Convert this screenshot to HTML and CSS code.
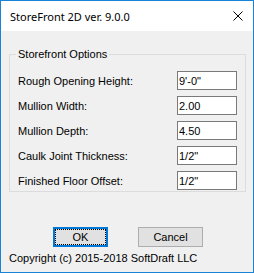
FILE: index.html
```html
<!DOCTYPE html>
<html lang="en">
<head>
    <meta charset="UTF-8">
    <meta name="viewport" content="width=device-width, initial-scale=1.0">
    <title>StoreFront 2D</title>
    <link rel="stylesheet" href="styles.css">
</head>
<body>
    <div class="window">
        <div class="titlebar">
            <span class="title">StoreFront 2D ver. 9.0.0</span>
            <svg class="close" width="10" height="10" viewBox="0 0 10 10">
                <path d="M0.5 0.5 L9.5 9.5 M9.5 0.5 L0.5 9.5" stroke="#000" stroke-width="1" fill="none"/>
            </svg>
        </div>
        <div class="client">
            <fieldset class="group">
                <legend>Storefront Options</legend>
                <div class="row">
                    <label>Rough Opening Height:</label>
                    <input type="text" value="9'-0&quot;">
                </div>
                <div class="row">
                    <label>Mullion Width:</label>
                    <input type="text" value="2.00">
                </div>
                <div class="row">
                    <label>Mullion Depth:</label>
                    <input type="text" value="4.50">
                </div>
                <div class="row">
                    <label>Caulk Joint Thickness:</label>
                    <input type="text" value="1/2&quot;">
                </div>
                <div class="row">
                    <label>Finished Floor Offset:</label>
                    <input type="text" value="1/2&quot;">
                </div>
            </fieldset>
            <div class="buttons">
                <button class="btn btn-ok">OK</button>
                <button class="btn btn-cancel">Cancel</button>
            </div>
            <div class="copyright">Copyright (c) 2015-2018 SoftDraft LLC</div>
        </div>
    </div>
</body>
</html>
```

FILE: styles.css
```css
body {
    margin: 0;
    font-family: "Liberation Sans", Arial, sans-serif;
    font-size: 11px;
    color: #000;
}

.window {
    width: 254px;
    height: 273px;
    box-sizing: border-box;
    border: 1px solid #1883d7;
    background-color: #f0f0f0;
    display: flex;
    flex-direction: column;
}

.titlebar {
    height: 30px;
    background-color: #fff;
    display: flex;
    align-items: center;
    justify-content: space-between;
    padding: 0 10px 0 9px;
}

.title {
    font-family: "Noto Sans", sans-serif;
    font-size: 11px;
}

.client {
    flex: 1;
    display: flex;
    flex-direction: column;
}

.group {
    margin: 16px 7px 0 8px;
    padding: 0 8px 1px 8px;
    border: 1px solid #dcdcdc;
    display: flex;
    flex-direction: column;
    gap: 6px;
}

.group legend {
    padding: 0 2px;
    margin-left: -2px;
    line-height: 14px;
    margin-bottom: 10px;
}

.row {
    display: flex;
    justify-content: space-between;
    align-items: center;
    height: 19px;
}

.row input {
    width: 60px;
    height: 19px;
    box-sizing: border-box;
    border: 1px solid #7a7a7a;
    background: #fff;
    padding: 0 1px;
    margin: 0;
    font-family: inherit;
    font-size: 11px;
    color: #000;
    outline: none;
}

.buttons {
    display: flex;
    gap: 30px;
    margin: 35px 0 0 52px;
}

.btn {
    height: 20px;
    box-sizing: border-box;
    background-color: #e1e1e1;
    border: 1px solid #adadad;
    font-family: inherit;
    font-size: 11px;
    color: #000;
    padding: 0;
}

.btn-ok {
    width: 55px;
    border: 2px solid #0078d7;
    outline: 1px dotted #000;
    outline-offset: -3px;
}

.btn-cancel {
    width: 65px;
}

.copyright {
    margin: 5px 0 0 8px;
    line-height: 13px;
}
```
